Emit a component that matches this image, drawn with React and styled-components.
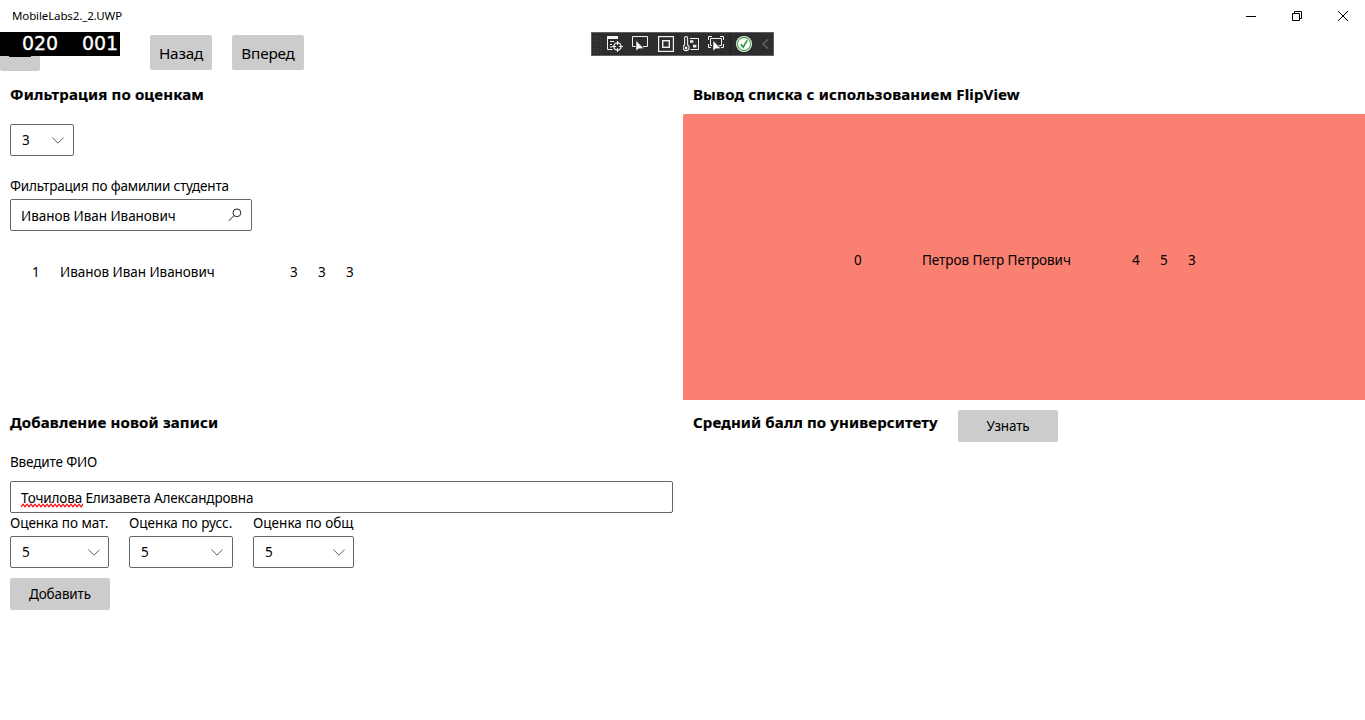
import React from "react";
import styled, { createGlobalStyle } from "styled-components";

const GlobalStyle = createGlobalStyle`
  * { box-sizing: border-box; }
  body {
    margin: 0;
    background: #fff;
    color: #000;
    font-family: "Noto Sans", "Open Sans", sans-serif;
    font-size: 13.5px;
    line-height: 20px;
    overflow: hidden;
  }
`;

const Window = styled.div`
  position: relative;
  width: 1365px;
  height: 720px;
  background: #fff;
  white-space: nowrap;
`;

const TitleBar = styled.header`
  display: flex;
  justify-content: space-between;
  height: 32px;
  padding-left: 12px;
`;

const Title = styled.span`
  font-size: 11.5px;
  line-height: 31px;
  letter-spacing: -0.12px;
`;

const WindowControls = styled.div`
  display: flex;
  margin-right: -1px;
`;

const ControlButton = styled.div`
  display: flex;
  align-items: center;
  justify-content: center;
  width: 46px;
  height: 32px;
`;

const Nav = styled.nav`
  display: flex;
  height: 43px;
  padding-top: 3px;
`;

const BlankButton = styled.div`
  width: 40px;
  height: 36px;
  margin-right: 110px;
  border-radius: 2px;
  background: #ccc;
`;

const NavButton = styled.button`
  width: ${(p) => p.$width}px;
  height: 35px;
  margin: 0 20px 0 0;
  padding: 0;
  border: 0;
  border-radius: 2px;
  background: #ccc;
  color: #000;
  font-family: inherit;
  font-size: 15.3px;
  line-height: 36px;
  letter-spacing: -0.2px;
`;

const FrameCounter = styled.div`
  position: absolute;
  left: 0;
  top: 32px;
  display: flex;
  gap: 24px;
  width: 120px;
  height: 24px;
  padding-left: 22px;
  background: #000;
  color: #fff;
  font-family: "DejaVu Sans", sans-serif;
  font-size: 19px;
  line-height: 23px;
  letter-spacing: -0.09px;
  -webkit-text-stroke: 0.3px #fff;

  &::after {
    content: "";
    position: absolute;
    left: 9px;
    top: 24px;
    width: 22px;
    height: 1px;
    background: #000;
  }
`;

const DebugBar = styled.div`
  position: absolute;
  left: 591px;
  top: 32px;
  display: flex;
  align-items: center;
  width: 183px;
  height: 24px;
  padding-left: 2px;
  border: 1px solid #606062;
  background: #2d2d30;
`;

const BarIcon = styled.svg`
  flex: none;
  display: block;
  margin-left: ${(p) => p.$gap || 0}px;
`;

const Divider = styled.div`
  width: 1px;
  height: 22px;
  margin-left: 6px;
  background: #222224;
`;

const Content = styled.main`
  display: grid;
  grid-template-columns: 683px 682px;
  grid-template-rows: 325px 320px;
`;

const Panel = styled.section`
  display: flex;
  flex-direction: column;
  align-items: flex-start;
  padding: ${(p) => p.$top}px 10px 0;
`;

const FlipPanel = styled.section`
  display: flex;
  flex-direction: column;
  padding-top: 9px;
`;

const Heading = styled.h2`
  margin: 0;
  font-size: 15px;
  font-weight: 700;
  line-height: 20px;
  letter-spacing: ${(p) => p.$spacing}px;
  -webkit-text-stroke: 0.2px #000;
  ${FlipPanel} & { padding: 0 10px; }
`;

const Label = styled.label`
  display: block;
  margin-top: ${(p) => p.$top || 0}px;
  height: 20px;
  letter-spacing: ${(p) => p.$spacing || 0}px;
`;

const Field = styled.div`
  display: flex;
  align-items: center;
  justify-content: space-between;
  width: ${(p) => p.$width}px;
  height: 32px;
  margin-top: ${(p) => p.$top}px;
  padding: ${(p) => (p.$select ? `0 ${p.$end}px 0 11px` : "2px 9px 0 10px")};
  border: 1px solid #666;
  border-radius: 2px;
  background: #fff;
  letter-spacing: ${(p) => p.$spacing || 0}px;
`;

const SearchIcon = styled.svg`
  margin-bottom: 2px;
`;

const Misspelled = styled.span`
  position: relative;
`;

const Squiggle = styled.svg`
  position: absolute;
  left: 0;
  top: 14px;
`;

const Grades = styled.div`
  display: flex;
  gap: 20px;
`;

const Grade = styled.div`
  width: ${(p) => p.$width}px;
`;

const Button = styled.button`
  width: 100px;
  height: 32px;
  margin-top: ${(p) => p.$top || 0}px;
  padding: 0;
  border: 0;
  border-radius: 2px;
  background: #ccc;
  color: #000;
  font-family: inherit;
  font-size: 13.5px;
  line-height: 32px;
  letter-spacing: -0.15px;
`;

const ListRow = styled.div`
  display: flex;
  gap: 20px;
  margin: 31px 0 0 22px;
`;

const Cell = styled.span`
  width: ${(p) => p.$width || 8}px;
  letter-spacing: -0.04px;
`;

const FlipView = styled.div`
  display: flex;
  align-items: center;
  justify-content: center;
  gap: 60px;
  height: 286px;
  margin-top: 10px;
  padding: 6px 0 0 2px;
  border-radius: 2px 0 0 0;
  background: #fa8072;
`;

const Marks = styled.div`
  display: flex;
  gap: 20px;
`;

const AverageRow = styled.div`
  display: flex;
  gap: 20px;
`;

const AverageHeading = styled(Heading)`
  width: 245px;
  margin-top: 2px;
`;

const Chevron = () => (
  <svg width="12" height="7" viewBox="0 0 12 7" fill="none" stroke="#5c5c5c" strokeWidth="1">
    <path d="M0.4 0.6 6 6.2 11.6 0.6" />
  </svg>
);

const Select = ({ value, width, top, end }) => (
  <Field $select $width={width} $top={top} $end={end}>
    <span>{value}</span>
    <Chevron />
  </Field>
);

const grades = [
  { label: "Оценка по мат.", value: 5, width: 99, spacing: -0.05, end: 8 },
  { label: "Оценка по русс.", value: 5, width: 104, spacing: 0.03, end: 9 },
  { label: "Оценка по общ", value: 5, width: 101, spacing: 0.03, end: 8 },
];

const gripDots = [];
for (let row = 0; row < 9; row += 1) {
  const shift = row % 2 ? 2 : 0;
  gripDots.push([shift, row * 2], [shift + 4, row * 2]);
}

const Cursor = ({ x, y }) => (
  <path
    transform={`translate(${x} ${y})`}
    d="M0 0 L0 10.5 L2.7 8.3 L8 8.1 Z"
    fill="#fff"
    stroke="#2d2d30"
    strokeWidth="0.6"
  />
);

const DebugToolbar = () => (
  <DebugBar>
    <BarIcon width="7" height="17" fill="#505053">
      {gripDots.map(([x, y]) => (
        <rect key={`${x}-${y}`} x={x} y={y} width="1" height="1" />
      ))}
    </BarIcon>
    <BarIcon $gap={6} width="16" height="16" fill="none" stroke="#f1f1f1">
      <path d="M0 1.5h11" strokeWidth="3" />
      <path d="M0.5 2v11.5h5M3 5.5h4M3 8.5h2M3 11h2" />
      <circle cx="10.5" cy="10.5" r="3.6" strokeWidth="1.3" />
      <path d="M10.5 5v4M10.5 12v4M5 10.5h4M12 10.5h4" />
    </BarIcon>
    <BarIcon $gap={9} width="16" height="16" fill="none" stroke="#f1f1f1">
      <path d="M4 10.5H0.5V0.5H15.5V10.5H11" />
      <Cursor x={4} y={4.5} />
    </BarIcon>
    <BarIcon $gap={10} width="16" height="16" fill="none" stroke="#f1f1f1">
      <rect x="0.6" y="0.6" width="14.8" height="14.8" strokeWidth="1.2" />
      <rect x="4.7" y="4.7" width="6.6" height="6.6" strokeWidth="1.4" />
    </BarIcon>
    <BarIcon $gap={9} width="16" height="16" fill="none" stroke="#f1f1f1">
      <path d="M7 2.5h8.5v11H7.5" />
      <path d="M7 4.2h3.4v2.6H7zM10 8.7h3.4v2.8H10z" fill="#f1f1f1" stroke="none" />
      <path d="M1.6 9V2a1.5 1.5 0 0 1 3 0v7a3 3 0 1 1-3 0z" strokeWidth="1.1" />
      <circle cx="3.1" cy="12" r="1.4" fill="#f1f1f1" stroke="none" />
    </BarIcon>
    <BarIcon $gap={9} width="16" height="16" fill="none" stroke="#f1f1f1">
      <path d="M0.5 4V0.5H4M12 0.5h3.5V4M0.5 8v3.5H3M15.5 8v3.5H13" />
      <path d="M4 9.5H2.5V2.5h11v7H11" />
      <Cursor x={5} y={4.5} />
    </BarIcon>
    <Divider />
    <BarIcon $gap={5} width="16" height="16">
      <circle cx="8" cy="8" r="8" fill="#f4fff4" />
      <circle cx="8" cy="8" r="6.6" fill="#fff" stroke="#3faa4c" strokeWidth="1.1" />
      <path d="M4.7 8.2 7.2 11 11.2 4.4" fill="none" stroke="#2c9c3a" strokeWidth="1.7" />
    </BarIcon>
    <BarIcon $gap={10} width="7" height="10" fill="none" stroke="#66666a" strokeWidth="1.5">
      <path d="M6 0.5 1 5 6 9.5" />
    </BarIcon>
  </DebugBar>
);

export default function App() {
  return (
    <Window>
      <GlobalStyle />
      <TitleBar>
        <Title>MobileLabs2._2.UWP</Title>
        <WindowControls>
          <ControlButton>
            <svg width="10" height="10" stroke="#000">
              <path d="M0 5.5h10" />
            </svg>
          </ControlButton>
          <ControlButton>
            <svg width="10" height="10" fill="none" stroke="#000">
              <path d="M0.5 2.5h7v7h-7zM2.5 2.5v-2h7v7h-2" />
            </svg>
          </ControlButton>
          <ControlButton>
            <svg width="10" height="10" stroke="#000">
              <path d="M0 0 10 10M10 0 0 10" />
            </svg>
          </ControlButton>
        </WindowControls>
      </TitleBar>

      <Nav>
        <BlankButton />
        <NavButton $width={62}>Назад</NavButton>
        <NavButton $width={72}>Вперед</NavButton>
      </Nav>
      <FrameCounter>
        <span>020</span>
        <span>001</span>
      </FrameCounter>
      <DebugToolbar />

      <Content>
        <Panel $top={9}>
          <Heading $spacing={0.15}>Фильтрация по оценкам</Heading>
          <Select value={3} width={64} top={20} end={9} />
          <Label $top={20} $spacing={-0.2}>Фильтрация по фамилии студента</Label>
          <Field $width={242} $top={3} $spacing={-0.04}>
            <span>Иванов Иван Иванович</span>
            <SearchIcon width="14" height="14" viewBox="0 0 14 14" fill="none" stroke="#222">
              <circle cx="8.9" cy="4.8" r="3.9" />
              <path d="M6 7.6 0.8 12.8" />
            </SearchIcon>
          </Field>
          <ListRow>
            <Cell>1</Cell>
            <Cell $width={210}>Иванов Иван Иванович</Cell>
            <Cell>3</Cell>
            <Cell>3</Cell>
            <Cell>3</Cell>
          </ListRow>
        </Panel>

        <FlipPanel>
          <Heading $spacing={0.15}>Вывод списка с использованием FlipView</Heading>
          <FlipView>
            <Cell>0</Cell>
            <Cell $width={150}>Петров Петр Петрович</Cell>
            <Marks>
              <Cell>4</Cell>
              <Cell>5</Cell>
              <Cell>3</Cell>
            </Marks>
          </FlipView>
        </FlipPanel>

        <Panel $top={12}>
          <Heading $spacing={0.15}>Добавление новой записи</Heading>
          <Label $top={20} $spacing={-0.15}>Введите ФИО</Label>
          <Field $width={663} $top={9} $spacing={-0.15}>
            <span>
              <Misspelled>
                Точилова
                <Squiggle width="62" height="5" fill="none" stroke="#f00" strokeWidth="1.3">
                  <path d={`M0 3.8${Array.from({ length: 16 }, () => "l2 -2.6l2 2.6").join("")}`} />
                </Squiggle>
              </Misspelled>{" "}
              Елизавета Александровна
            </span>
          </Field>
          <Grades>
            {grades.map((g) => (
              <Grade key={g.label} $width={g.width}>
                <Label $spacing={g.spacing}>{g.label}</Label>
                <Select value={g.value} width={g.width} top={3} end={g.end} />
              </Grade>
            ))}
          </Grades>
          <Button $top={10}>Добавить</Button>
        </Panel>

        <Panel $top={10}>
          <AverageRow>
            <AverageHeading $spacing={0.13}>Средний балл по университету</AverageHeading>
            <Button>Узнать</Button>
          </AverageRow>
        </Panel>
      </Content>
    </Window>
  );
}
